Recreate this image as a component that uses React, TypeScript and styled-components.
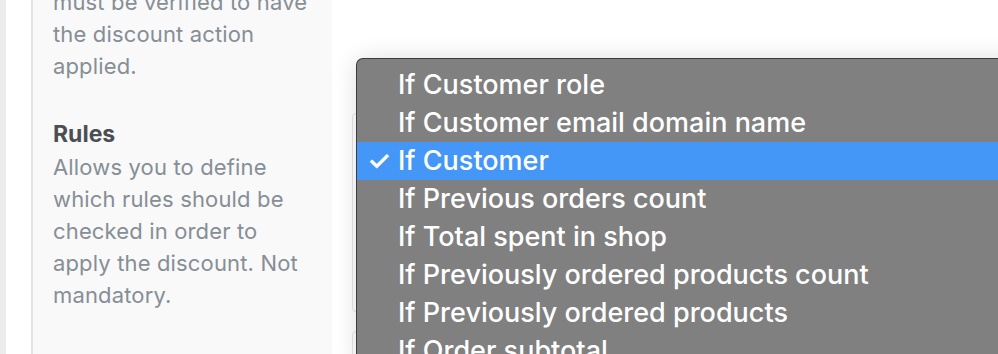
import styled, { createGlobalStyle } from "styled-components";

const GlobalStyle = createGlobalStyle`
    html, body {
        margin: 0;
        padding: 0;
        background: #ffffff;
        font-family: Inter, "Noto Sans", "Liberation Sans", sans-serif;
    }
    #root {
        height: 354px;
        overflow: hidden;
    }
`;

const Page = styled.div`
    display: flex;
    height: 354px;
    position: relative;
    overflow: hidden;
`;

const Strip = styled.div`
    flex: 0 0 6px;
    background-color: #ececec;
`;

const Gutter = styled.div`
    flex: 0 0 25px;
    background-color: #ffffff;
`;

const Sidebar = styled.aside`
    box-sizing: border-box;
    flex: 0 0 301px;
    border-left: solid 2px #e2e2e2;
    background-color: #f9f9f9;
    padding: 0 24px 0 20px;
    margin-top: -14px;
`;

const HelpText = styled.p`
    margin: 0;
    font-size: 22px;
    line-height: 32px;
    letter-spacing: 0.15px;
    color: #868e96;
`;

const HelpTitle = styled.h4`
    margin: 35px 0 0;
    font-size: 23px;
    line-height: 34px;
    font-weight: 700;
    color: #4b4f54;
`;

const Main = styled.main`
    flex: 1;
    padding: 113px 0 0 20px;
    background-color: #ffffff;
`;

const Field = styled.div<{ height: number }>`
    height: ${props => props.height}px;
    border: solid 1px #e4e4e4;
    border-radius: 4px;
    margin-bottom: 19px;
`;

const Menu = styled.ul`
    position: absolute;
    top: 58px;
    left: 356px;
    width: 700px;
    margin: 0;
    padding: 7px 0 0;
    list-style: none;
    background-color: #808080;
    border: solid 1px #3c3c3c;
    border-right: none;
    border-radius: 7px 0 0 0;
    box-shadow: 0 0 24px rgba(0, 0, 0, 0.12);
`;

const Item = styled.li<{ selected?: boolean }>`
    display: flex;
    align-items: center;
    height: 38px;
    padding: 0 0 2px 10px;
    box-sizing: border-box;
    font-size: 27px;
    font-weight: 500;
    color: #ffffff;
    white-space: nowrap;
    background-color: ${props => (props.selected ? "#4597f7" : "transparent")};
`;

const Check = styled.span`
    flex: 0 0 31px;
    font-size: 27px;
    font-weight: 600;
`;

const options = [
    "If Customer role",
    "If Customer email domain name",
    "If Customer",
    "If Previous orders count",
    "If Total spent in shop",
    "If Previously ordered products count",
    "If Previously ordered products",
    "If Order subtotal",
];

const App = () => {
    const selected = "If Customer";

    return (
        <Page>
            <GlobalStyle />
            <Strip />
            <Gutter />
            <Sidebar>
                <HelpText>
                    must be verified to have the discount action applied.
                </HelpText>
                <HelpTitle>Rules</HelpTitle>
                <HelpText>
                    Allows you to define which rules should be checked in order to apply the discount. Not mandatory.
                </HelpText>
            </Sidebar>
            <Main>
                <Field height={197} />
                <Field height={80} />
            </Main>
            <Menu role="listbox">
                {options.map((option) => (
                    <Item key={option} selected={option === selected}>
                        <Check>{option === selected ? "✓" : ""}</Check>
                        {option}
                    </Item>
                ))}
            </Menu>
        </Page>
    );
};

export default App;
